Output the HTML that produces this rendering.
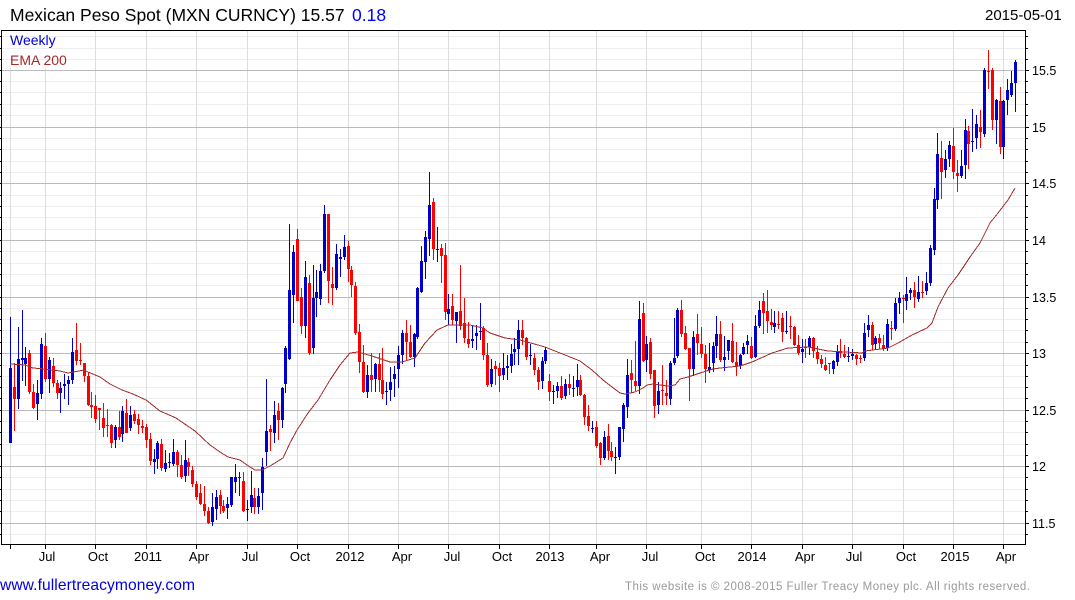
<!DOCTYPE html>
<html><head><meta charset="utf-8"><title>Mexican Peso Spot</title>
<style>html,body{margin:0;padding:0;background:#fff}svg{display:block}text{font-family:"Liberation Sans",Arial,sans-serif}</style></head>
<body>
<svg xmlns="http://www.w3.org/2000/svg" width="1075" height="600" viewBox="0 0 1075 600">
<g shape-rendering="crispEdges" fill="none">
<path stroke="#eeeeee" d="M2 36.5H1025M2 48.5H1025M2 59.5H1025M2 81.5H1025M2 92.5H1025M2 104.5H1025M2 115.5H1025M2 138.5H1025M2 149.5H1025M2 161.5H1025M2 172.5H1025M2 195.5H1025M2 206.5H1025M2 217.5H1025M2 229.5H1025M2 251.5H1025M2 263.5H1025M2 274.5H1025M2 285.5H1025M2 308.5H1025M2 319.5H1025M2 330.5H1025M2 342.5H1025M2 365.5H1025M2 376.5H1025M2 387.5H1025M2 398.5H1025M2 421.5H1025M2 432.5H1025M2 444.5H1025M2 455.5H1025M2 477.5H1025M2 489.5H1025M2 500.5H1025M2 511.5H1025M2 534.5H1025"/>
<path stroke="#dddddd" d="M10.5 68V544M45.5 68V544M95.5 31V544M146.5 31V544M196.5 31V544M247.5 31V544M297.5 31V544M348.5 31V544M398.5 31V544M448.5 31V544M499.5 31V544M549.5 31V544M596.5 31V544M646.5 31V544M701.5 31V544M751.5 31V544M802.5 31V544M852.5 31V544M903.5 31V544M953.5 31V544M1003.5 31V544"/>
<path stroke="#bbbbbb" d="M2 70.5H1025M2 127.5H1025M2 183.5H1025M2 240.5H1025M2 297.5H1025M2 353.5H1025M2 410.5H1025M2 466.5H1025M2 523.5H1025"/>

<!-- blue wicks -->
<path stroke="#0000cc" d="M10.5 317V443M18.5 327V409M22.5 310V381M25.5 347V386M37.5 380V420M41.5 338V399M49.5 357V393M60.5 382V413M64.5 374V399M68.5 376V405M72.5 338V384M115.5 425V448M122.5 406V442M130.5 406V431M154.5 449V474M157.5 441V469M165.5 450V472M169.5 453V468M173.5 439V466M185.5 440V482M212.5 493V526M216.5 490V520M227.5 497V519M231.5 477V507M235.5 464V493M239.5 472V496M247.5 500V521M251.5 471V513M258.5 488V514M262.5 458V510M266.5 379V466M274.5 401V443M282.5 387V428M285.5 346V393M289.5 224V360M293.5 245V323M305.5 261V338M313.5 265V354M316.5 270V317M320.5 264V305M324.5 205V273M336.5 244V290M340.5 249V277M344.5 235V260M367.5 365V398M375.5 363V392M386.5 382V405M390.5 367V401M394.5 366V397M398.5 346V388M402.5 330V364M414.5 333V367M417.5 287V339M421.5 246V293M425.5 231V279M429.5 172V256M437.5 227V262M448.5 294V325M456.5 312V343M472.5 325V348M476.5 325V350M480.5 303V340M491.5 359V387M503.5 353V380M507.5 355V380M511.5 344V373M514.5 338V365M518.5 320V365M530.5 344V365M542.5 357V389M545.5 347V364M553.5 385V404M557.5 382V398M565.5 379V399M573.5 376V397M577.5 364V396M592.5 421V433M604.5 431V460M615.5 447V474M619.5 427V460M623.5 403V442M627.5 359V418M639.5 301V394M646.5 336V372M658.5 382V414M670.5 361V405M674.5 318V365M677.5 308V358M693.5 331V376M709.5 343V373M713.5 342V372M716.5 316V358M724.5 336V371M728.5 342V360M740.5 354V369M743.5 343V355M747.5 335V354M755.5 315V358M759.5 301V328M774.5 311V333M786.5 311V334M802.5 339V363M809.5 336V355M833.5 360V374M837.5 345V366M848.5 347V362M852.5 349V360M864.5 323V361M868.5 315V337M875.5 336V350M887.5 319V351M895.5 298V331M899.5 292V314M906.5 277V310M910.5 288V300M918.5 276V302M926.5 272V295M930.5 245V286M934.5 188V255M937.5 133V209M945.5 150V178M949.5 141V167M961.5 150V178M965.5 119V179M972.5 109V152M976.5 115V149M984.5 68V137M996.5 99V144M1003.5 100V159M1007.5 79V115M1011.5 71V97M1015.5 60V112"/>
<!-- blue bodies -->
<path stroke="#0000cc" stroke-width="3" d="M10.5 368V443M18.5 359V399M22.5 358V360M25.5 358V364M37.5 393V404M41.5 344V394M49.5 360V379M60.5 388V393M64.5 384V386M68.5 380V384M72.5 352V380M115.5 427V440M122.5 411V434M130.5 415V428M154.5 459V462M157.5 443V459M165.5 463V469M169.5 462V463M173.5 452V464M185.5 460V476M212.5 507V522M216.5 497V509M227.5 504V508M231.5 477V505M235.5 477V482M239.5 477V478M247.5 509V510M251.5 495V507M258.5 496V507M262.5 467V493M266.5 431V452M274.5 415V433M282.5 388V420M285.5 348V384M289.5 290V359M293.5 252V295M305.5 277V326M313.5 298V348M316.5 292V298M320.5 271V299M324.5 214V271M336.5 254V288M340.5 257V259M344.5 247V257M367.5 375V392M375.5 364V379M386.5 391V392M390.5 382V390M394.5 374V379M398.5 355V369M402.5 333V355M414.5 334V357M417.5 288V337M421.5 261V292M425.5 237V262M429.5 205V239M437.5 249V250M448.5 309V314M456.5 312V321M472.5 339V341M476.5 333V336M480.5 331V332M491.5 369V384M503.5 368V375M507.5 366V368M511.5 354V366M514.5 349V352M518.5 330V349M530.5 355V356M542.5 361V381M545.5 350V361M553.5 391V392M557.5 386V391M565.5 384V396M573.5 388V389M577.5 380V387M592.5 428V429M604.5 437V458M615.5 457V458M619.5 427V457M623.5 405V429M627.5 375V407M639.5 319V386M646.5 344V360M658.5 391V405M670.5 363V399M674.5 358V363M677.5 310V356M693.5 337V369M709.5 367V370M713.5 346V363M716.5 334V346M724.5 357V360M728.5 340V351M740.5 355V366M743.5 347V354M747.5 341V345M755.5 326V357M759.5 310V326M774.5 323V327M786.5 331V332M802.5 349V352M809.5 338V347M833.5 361V369M837.5 352V362M848.5 356V357M852.5 354V356M864.5 333V358M868.5 325V330M875.5 338V344M887.5 324V348M895.5 303V329M899.5 298V303M906.5 294V301M910.5 290V293M918.5 292V299M926.5 283V291M930.5 248V283M934.5 199V250M937.5 154V200M945.5 159V170M949.5 145V159M961.5 166V176M965.5 130V165M972.5 141V142M976.5 124V138M984.5 70V134M996.5 100V120M1003.5 101V147M1007.5 90V100M1011.5 83V95M1015.5 62V83"/>
<!-- red wicks -->
<path stroke="#ff0000" d="M14.5 363V431M29.5 350V394M33.5 384V409M45.5 333V382M53.5 358V387M57.5 380V399M76.5 323V365M80.5 343V365M84.5 363V382M88.5 372V406M91.5 392V418M95.5 395V423M99.5 408V430M103.5 403V437M107.5 409V437M111.5 424V448M119.5 411V440M126.5 399V433M134.5 410V424M138.5 414V434M142.5 420V433M146.5 424V448M150.5 433V465M161.5 439V471M177.5 450V477M181.5 455V479M188.5 458V476M192.5 466V487M196.5 481V500M200.5 484V505M204.5 486V516M208.5 507V524M220.5 490V514M223.5 500V513M243.5 472V512M254.5 488V514M270.5 425V451M278.5 403V440M297.5 229V301M301.5 288V334M309.5 275V355M328.5 214V303M332.5 267V305M348.5 241V282M351.5 266V297M355.5 282V335M359.5 324V373M363.5 345V393M371.5 353V392M379.5 353V392M382.5 348V399M406.5 320V360M410.5 325V358M433.5 198V260M441.5 244V283M445.5 243V320M452.5 294V325M460.5 265V330M464.5 298V343M468.5 322V348M483.5 326V360M487.5 343V387M495.5 361V385M499.5 363V392M522.5 320V345M526.5 337V360M534.5 353V375M538.5 367V390M549.5 374V401M561.5 376V400M569.5 374V395M580.5 375V396M584.5 394V425M588.5 405V431M596.5 421V448M600.5 442V465M608.5 424V460M611.5 442V461M631.5 360V393M635.5 341V391M643.5 303V362M650.5 338V379M654.5 370V418M662.5 365V405M666.5 380V405M681.5 300V337M685.5 326V350M689.5 348V401M697.5 314V355M701.5 327V358M705.5 345V383M720.5 321V362M732.5 323V363M736.5 342V376M751.5 337V359M763.5 293V334M767.5 290V333M771.5 309V330M778.5 311V329M782.5 313V342M790.5 316V339M794.5 326V346M798.5 335V355M805.5 339V358M813.5 337V358M817.5 346V364M821.5 355V368M825.5 357V371M829.5 363V374M840.5 339V358M844.5 345V358M856.5 354V365M860.5 355V363M872.5 322V350M879.5 334V349M883.5 335V351M891.5 321V340M903.5 295V323M914.5 282V308M922.5 281V298M941.5 141V199M953.5 128V179M957.5 160V192M968.5 126V169M980.5 110V148M988.5 50V89M992.5 68V130M1000.5 87V154"/>
<!-- red bodies -->
<path stroke="#ff0000" stroke-width="3" d="M14.5 387V399M29.5 353V392M33.5 392V408M45.5 346V379M53.5 366V383M57.5 383V393M76.5 350V361M80.5 360V361M84.5 363V376M88.5 376V405M91.5 405V407M95.5 406V419M99.5 408V410M103.5 418V428M107.5 425V426M111.5 425V443M119.5 427V437M126.5 413V433M134.5 414V421M138.5 419V425M142.5 426V428M146.5 427V440M150.5 439V461M161.5 444V468M177.5 452V465M181.5 465V477M188.5 462V467M192.5 470V484M196.5 484V497M200.5 493V504M204.5 504V511M208.5 511V523M220.5 495V506M223.5 506V511M243.5 481V511M254.5 498V507M270.5 429V432M278.5 411V420M297.5 239V301M301.5 297V326M309.5 283V353M328.5 214V281M332.5 284V288M348.5 246V269M351.5 270V285M355.5 286V333M359.5 332V362M363.5 362V392M371.5 375V380M379.5 364V380M382.5 380V394M406.5 333V342M410.5 342V357M433.5 202V249M441.5 248V256M445.5 255V312M452.5 306V320M460.5 311V326M464.5 323V338M468.5 339V344M483.5 328V355M487.5 355V385M495.5 366V369M499.5 368V376M522.5 330V338M526.5 338V357M534.5 358V370M538.5 370V382M549.5 381V392M561.5 386V398M569.5 384V388M580.5 380V395M584.5 395V417M588.5 416V426M596.5 427V446M600.5 443V458M608.5 436V451M611.5 451V457M631.5 373V380M635.5 381V386M643.5 313V361M650.5 342V374M654.5 370V406M662.5 390V391M666.5 393V396M681.5 310V334M685.5 333V349M689.5 348V369M697.5 334V343M701.5 344V354M705.5 354V369M720.5 334V360M732.5 341V362M736.5 362V366M751.5 346V358M763.5 301V313M767.5 311V321M771.5 322V325M778.5 324V325M782.5 318V332M790.5 326V327M794.5 327V345M798.5 345V353M805.5 347V348M813.5 338V351M817.5 352V359M821.5 359V364M825.5 365V370M829.5 363V364M840.5 351V353M844.5 354V357M856.5 355V359M860.5 358V359M872.5 325V345M879.5 338V343M883.5 345V349M891.5 328V329M903.5 298V299M914.5 290V297M922.5 292V293M941.5 158V172M953.5 146V172M957.5 173V176M968.5 131V144M980.5 127V132M988.5 71V72M992.5 70V120M1000.5 101V147"/>
<!-- frame & ticks -->
<path stroke="#000000" d="M1.5 30V545M1 30.5H1026M1 544.5H1026M1025.5 30V545"/>
<path stroke="#000000" d="M0 36.5H1.5M0 48.5H1.5M0 59.5H1.5M0 70.5H1.5M0 81.5H1.5M0 92.5H1.5M0 104.5H1.5M0 115.5H1.5M0 127.5H1.5M0 138.5H1.5M0 149.5H1.5M0 161.5H1.5M0 172.5H1.5M0 183.5H1.5M0 195.5H1.5M0 206.5H1.5M0 217.5H1.5M0 229.5H1.5M0 240.5H1.5M0 251.5H1.5M0 263.5H1.5M0 274.5H1.5M0 285.5H1.5M0 297.5H1.5M0 308.5H1.5M0 319.5H1.5M0 330.5H1.5M0 342.5H1.5M0 353.5H1.5M0 365.5H1.5M0 376.5H1.5M0 387.5H1.5M0 398.5H1.5M0 410.5H1.5M0 421.5H1.5M0 432.5H1.5M0 444.5H1.5M0 455.5H1.5M0 466.5H1.5M0 477.5H1.5M0 489.5H1.5M0 500.5H1.5M0 511.5H1.5M0 523.5H1.5M0 534.5H1.5"/>
<path stroke="#000000" d="M1026 36.5H1028M1026 48.5H1028M1026 59.5H1028M1026 81.5H1028M1026 92.5H1028M1026 104.5H1028M1026 115.5H1028M1026 138.5H1028M1026 149.5H1028M1026 161.5H1028M1026 172.5H1028M1026 195.5H1028M1026 206.5H1028M1026 217.5H1028M1026 229.5H1028M1026 251.5H1028M1026 263.5H1028M1026 274.5H1028M1026 285.5H1028M1026 308.5H1028M1026 319.5H1028M1026 330.5H1028M1026 342.5H1028M1026 365.5H1028M1026 376.5H1028M1026 387.5H1028M1026 398.5H1028M1026 421.5H1028M1026 432.5H1028M1026 444.5H1028M1026 455.5H1028M1026 477.5H1028M1026 489.5H1028M1026 500.5H1028M1026 511.5H1028M1026 534.5H1028M1026 70.5H1029M1026 127.5H1029M1026 183.5H1029M1026 240.5H1029M1026 297.5H1029M1026 353.5H1029M1026 410.5H1029M1026 466.5H1029M1026 523.5H1029"/>
<path stroke="#000000" d="M10.5 545V549M45.5 545V549M95.5 545V549M146.5 545V549M196.5 545V549M247.5 545V549M297.5 545V549M348.5 545V549M398.5 545V549M448.5 545V549M499.5 545V549M549.5 545V549M596.5 545V549M646.5 545V549M701.5 545V549M751.5 545V549M802.5 545V549M852.5 545V549M903.5 545V549M953.5 545V549M1003.5 545V549"/>
<!-- EMA -->
<polyline stroke="#a52a2a" points="10,364 25,365 33,368 45,369 60,371 68,373 84,370 88,372 100,377 110,384 122,390 133,394 146,400 160,411 176,418 195,431 210,445 220,452 228,457 240,460 247,465 255,470 262,470 270,466 283,458 290,443 297,430 308,413 318,400 330,380 340,365 350,353 358,352 372,356 390,362 402,362 415,358 425,343 437,330 448,325 470,325 483,328 490,333 505,338 520,340 538,345 545,347 560,353 580,361 592,370 603,380 612,387 620,393 625,394 635,392 643,388 647,385 653,384 667,386 675,385 680,379 688,377 700,373 713,369 720,368 740,366 752,362 772,353 788,348 808,347 818,349 828,351 862,353 865,351 888,348 898,343 912,335 927,328 932,323 938,307 948,288 958,275 970,257 980,243 990,223 998,213 1008,200 1015,188"/>
</g>
<!-- title -->
<text x="10" y="21" font-size="17.5" fill="#000">Mexican Peso Spot (MXN CURNCY) 15.57</text>
<text x="352" y="21" font-size="17.5" fill="#0000ff">0.18</text>
<text x="985" y="20" font-size="15" fill="#000">2015-05-01</text>
<text x="10" y="45" font-size="14" fill="#0000cc">Weekly</text>
<text x="10" y="65" font-size="14" fill="#a52a2a">EMA 200</text>
<!-- y labels -->
<g font-size="12.5" fill="#000">
<text x="1032" y="75">15.5</text><text x="1032" y="132">15</text><text x="1032" y="188">14.5</text><text x="1032" y="245">14</text><text x="1032" y="302">13.5</text><text x="1032" y="358">13</text><text x="1032" y="415">12.5</text><text x="1032" y="471">12</text><text x="1032" y="528">11.5</text>
</g>
<!-- x labels -->
<g font-size="13" fill="#000" text-anchor="middle">
<text x="47" y="561">Jul</text><text x="98" y="561">Oct</text><text x="148" y="561">2011</text><text x="199" y="561">Apr</text><text x="250" y="561">Jul</text><text x="300" y="561">Oct</text><text x="350" y="561">2012</text><text x="402" y="561">Apr</text><text x="452" y="561">Jul</text><text x="502" y="561">Oct</text><text x="550" y="561">2013</text><text x="600" y="561">Apr</text><text x="650" y="561">Jul</text><text x="705" y="561">Oct</text><text x="752" y="561">2014</text><text x="805" y="561">Apr</text><text x="854" y="561">Jul</text><text x="906" y="561">Oct</text><text x="955" y="561">2015</text><text x="1006" y="561">Apr</text>
</g>
<!-- footer -->
<text x="0" y="590" font-size="15.6" fill="#0000e0" textLength="195" lengthAdjust="spacing">www.fullertreacymoney.com</text>
<text x="625" y="590" font-size="11.5" fill="#999999" textLength="405" lengthAdjust="spacing">This website is © 2008-2015 Fuller Treacy Money plc. All rights reserved.</text>
</svg>
</body></html>
